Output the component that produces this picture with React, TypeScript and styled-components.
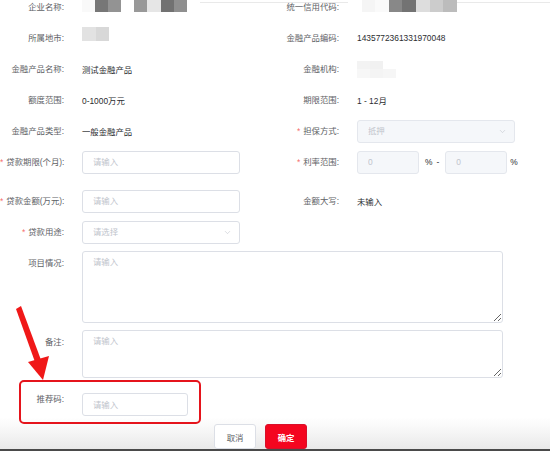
import React from "react";
import styled, { createGlobalStyle } from "styled-components";
import { ChevronDown } from "lucide-react";

const GlobalStyle = createGlobalStyle`
  html, body {
    margin: 0;
    padding: 0;
    background: #ffffff;
  }
  body {
    font-family: "Liberation Sans", "Noto Sans CJK SC", sans-serif;
    overflow: hidden;
  }
  * {
    box-sizing: border-box;
  }
`;

const Page = styled.div`
  position: relative;
  width: 550px;
  height: 451px;
  overflow: hidden;
  display: flex;
  flex-direction: column;
`;

const TopRule = styled.div`
  margin: 2px 0 0 200px;
  border-top: 1px solid #e9e9e9;
`;

const Form = styled.div`
  margin-top: -8px;
  display: flex;
  flex-direction: column;
`;

const Row = styled.div<{ $gap?: number }>`
  display: grid;
  grid-template-columns: 275px 275px;
  margin-bottom: ${({ $gap }) => ($gap ?? 7)}px;
`;

const Item = styled.div<{ $span?: boolean; $top?: boolean }>`
  display: flex;
  align-items: ${({ $top }) => ($top ? "flex-start" : "center")};
  min-height: 24px;
  grid-column: ${({ $span }) => ($span ? "1 / 3" : "auto")};
`;

const Label = styled.label<{ $lh?: number }>`
  flex-shrink: 0;
  width: 82px;
  padding-right: 18px;
  text-align: right;
  white-space: nowrap;
  font-size: 8.4px;
  line-height: ${({ $lh }) => ($lh ?? 24)}px;
  color: #606266;
`;

const Star = styled.span`
  color: #f56c6c;
  margin-right: 3px;
`;

const Value = styled.span`
  font-size: 8.4px;
  color: #2b2d30;
`;

const Input = styled.input<{ $w?: number; $disabled?: boolean }>`
  width: ${({ $w }) => ($w ?? 158)}px;
  height: 23px;
  padding: 0 10px;
  border: 1px solid ${({ $disabled }) => ($disabled ? "#e4e7ed" : "#dcdfe6")};
  border-radius: 3px;
  background: ${({ $disabled }) => ($disabled ? "#f5f7fa" : "#ffffff")};
  font-family: inherit;
  font-size: 8.4px;
  color: #c0c4cc;
  outline: none;

  &::placeholder {
    color: #c0c4cc;
  }
`;

const SelectWrap = styled.div`
  position: relative;
  display: flex;

  svg {
    position: absolute;
    right: 8px;
    top: 7px;
  }
`;

const TextArea = styled.textarea<{ $h: number }>`
  width: 421px;
  height: ${({ $h }) => $h}px;
  padding: 4px 10px;
  border: 1px solid #dcdfe6;
  border-radius: 3px;
  font-family: inherit;
  font-size: 8.4px;
  line-height: 1.5;
  resize: vertical;
  outline: none;

  &::placeholder {
    color: #c0c4cc;
  }
`;

const Unit = styled.span<{ $ml: number }>`
  margin-left: ${({ $ml }) => $ml}px;
  font-size: 8.4px;
  color: #2b2d30;
`;

const Dash = styled.span`
  margin: 0 6px 0 4px;
  font-size: 8.4px;
  color: #303133;
`;

const Mosaic = styled.div<{ $cols: number; $cw: number; $ch: number; $dy?: number; $ml?: number }>`
  display: grid;
  grid-template-columns: repeat(${({ $cols }) => $cols}, ${({ $cw }) => $cw}px);
  grid-auto-rows: ${({ $ch }) => $ch}px;
  margin-bottom: ${({ $dy }) => ($dy ?? 0)}px;
  margin-left: ${({ $ml }) => ($ml ?? 0)}px;
`;

const Cell = styled.div<{ $c: string }>`
  background: ${({ $c }) => $c};
`;

const Footer = styled.div`
  flex: 1;
  display: flex;
  gap: 9px;
  padding: 7px 0 0 214px;
  background: linear-gradient(#ffffff 0%, #f6f6f6 45%, #e9e9e9 100%);
  border-bottom: 3px solid #4a4a4a;
`;

const Button = styled.button<{ $primary?: boolean }>`
  width: 42px;
  height: 25px;
  padding: 0;
  border-radius: 3px;
  border: 1px solid ${({ $primary }) => ($primary ? "#d8102a" : "#dcdfe6")};
  background: ${({ $primary }) => ($primary ? "#f4061f" : "#ffffff")};
  color: ${({ $primary }) => ($primary ? "#ffffff" : "#606266")};
  font-family: inherit;
  font-size: 8.4px;
  font-weight: ${({ $primary }) => ($primary ? 700 : 400)};
`;

const Highlight = styled.div`
  position: absolute;
  left: 19px;
  top: 380px;
  width: 182px;
  height: 44px;
  border: 2px solid #e5141c;
  border-radius: 5px;
  pointer-events: none;
`;

const Arrow = styled.svg`
  position: absolute;
  left: 0;
  top: 300px;
  pointer-events: none;
`;

const MosaicBlock = ({
  cells,
  cols,
  cw,
  ch,
  dy,
  ml,
}: {
  cells: string[];
  cols: number;
  cw: number;
  ch: number;
  dy?: number;
  ml?: number;
}) => (
  <Mosaic $cols={cols} $cw={cw} $ch={ch} $dy={dy} $ml={ml}>
    {cells.map((c, i) => (
      <Cell key={i} $c={c} />
    ))}
  </Mosaic>
);

const Field = ({
  label,
  required,
  children,
}: {
  label: string;
  required?: boolean;
  children?: React.ReactNode;
}) => (
  <Item>
    <Label>
      {required && <Star>*</Star>}
      {label}:
    </Label>
    {children}
  </Item>
);

const Select = ({ text, disabled }: { text: string; disabled?: boolean }) => (
  <SelectWrap>
    <Input readOnly $disabled={disabled} placeholder={text} />
    <ChevronDown size={9} color="#c0c4cc" strokeWidth={1.5} />
  </SelectWrap>
);

const App = () => {
  return (
    <Page>
      <GlobalStyle />
      <TopRule />
      <Form>
        <Row>
          <Field label="企业名称">
            <MosaicBlock
              cols={9}
              cw={13.1}
              ch={12}
              dy={2}
              cells={["#f9f9f9", "#777777", "#939393", "#ffffff", "#999999", "#e6e6e6", "#727272", "#8f8f8f", "#ffffff"]}
            />
          </Field>
          <Field label="统一信用代码">
            <MosaicBlock
              cols={8}
              cw={13.6}
              ch={12}
              dy={2}
              ml={-9}
              cells={["#ffffff", "#f5f5f5", "#fafafa", "#888888", "#737373", "#dddddd", "#cccccc", "#bcbcbc"]}
            />
          </Field>
        </Row>
        <Row>
          <Field label="所属地市">
            <MosaicBlock cols={2} cw={13.5} ch={14} dy={8} cells={["#e2e2e2", "#d8d8d8"]} />
          </Field>
          <Field label="金融产品编码">
            <Value>1435772361331970048</Value>
          </Field>
        </Row>
        <Row>
          <Field label="金融产品名称">
            <Value>测试金融产品</Value>
          </Field>
          <Field label="金融机构">
            <MosaicBlock
              cols={3}
              cw={13}
              ch={8.5}
              cells={["#f3f3f3", "#f1f1f1", "#ffffff", "#f7f7f7", "#f4f4f4", "#f6f6f6"]}
            />
          </Field>
        </Row>
        <Row>
          <Field label="额度范围">
            <Value>0-1000万元</Value>
          </Field>
          <Field label="期限范围">
            <Value>1 - 12月</Value>
          </Field>
        </Row>
        <Row>
          <Field label="金融产品类型">
            <Value>一般金融产品</Value>
          </Field>
          <Field label="担保方式" required>
            <Select text="抵押" disabled />
          </Field>
        </Row>
        <Row $gap={15}>
          <Field label="贷款期限(个月)" required>
            <Input placeholder="请输入" />
          </Field>
          <Field label="利率范围" required>
            <Input $w={62} $disabled placeholder="0" readOnly />
            <Unit $ml={6}>%</Unit>
            <Dash>-</Dash>
            <Input $w={62} $disabled placeholder="0" readOnly />
            <Unit $ml={3}>%</Unit>
          </Field>
        </Row>
        <Row>
          <Field label="贷款金额(万元)" required>
            <Input placeholder="请输入" />
          </Field>
          <Field label="金额大写">
            <Value>未输入</Value>
          </Field>
        </Row>
        <Row>
          <Field label="贷款用途" required>
            <Select text="请选择" />
          </Field>
        </Row>
        <Row>
          <Item $span $top>
            <Label>项目情况:</Label>
            <TextArea $h={72} placeholder="请输入" />
          </Item>
        </Row>
        <Row $gap={15}>
          <Item $span $top>
            <Label>备注:</Label>
            <TextArea $h={48} placeholder="请输入" />
          </Item>
        </Row>
        <Row $gap={0}>
          <Item $top>
            <Label $lh={13}>推荐码:</Label>
            <Input $w={106} placeholder="请输入" />
          </Item>
        </Row>
      </Form>
      <Footer>
        <Button>取消</Button>
        <Button $primary>确定</Button>
      </Footer>
      <Highlight />
      <Arrow width="60" height="85" viewBox="0 300 60 85">
        <polygon points="16,309 21,306 41,360 35,362" fill="#f01818" />
        <polygon points="28,362 49,356 43,380" fill="#f01818" />
      </Arrow>
    </Page>
  );
};

export default App;
